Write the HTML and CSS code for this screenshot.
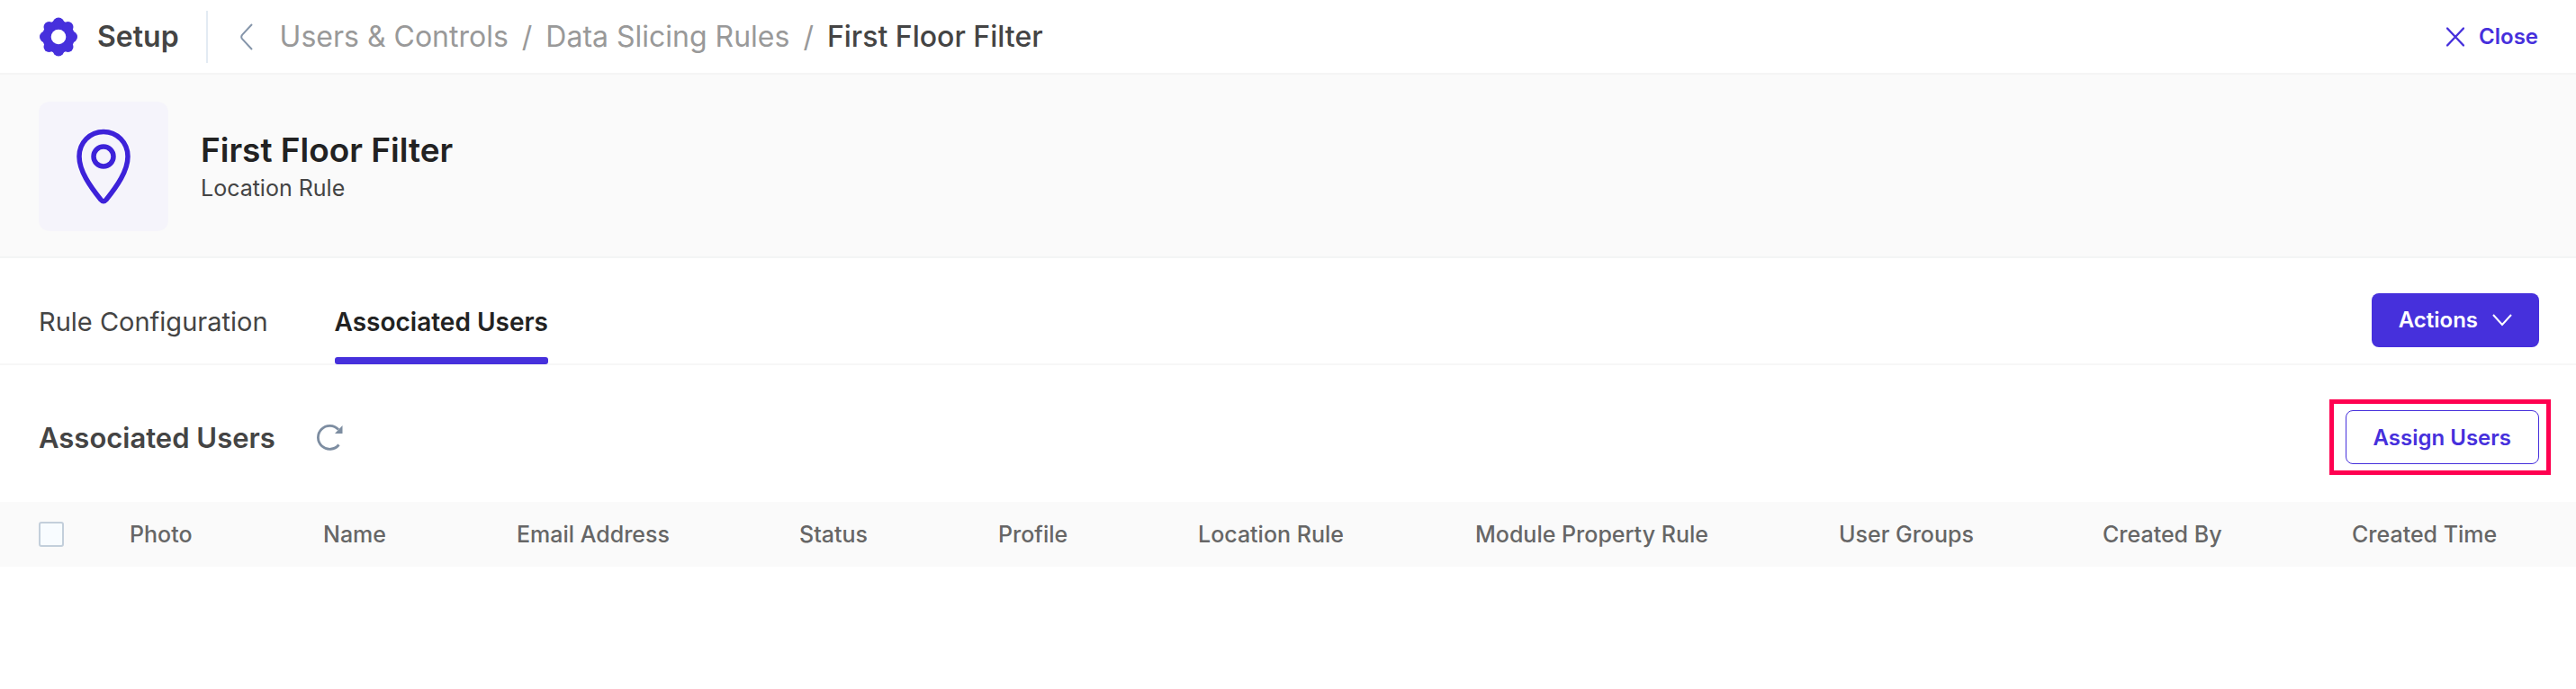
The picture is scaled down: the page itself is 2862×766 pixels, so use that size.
FILE: index.html
```
<!DOCTYPE html>
<html lang="en">
  <head>
    <meta charset="utf-8">
    <title>First Floor Filter</title>
    <link rel="stylesheet" href="styles.css">
  </head>
  <body>
    <header class="topbar">
      <div class="setup">
        <svg class="gear" viewBox="0 0 42 44">
          <g fill="#4630dc">
            <circle cx="21" cy="22" r="18"/>
            <circle cx="21" cy="7" r="6.5"/>
            <circle cx="21" cy="37" r="6.5"/>
            <circle cx="6.5" cy="22" r="6.5"/>
            <circle cx="35.5" cy="22" r="6.5"/>
            <circle cx="10.5" cy="11" r="6"/>
            <circle cx="31.5" cy="11" r="6"/>
            <circle cx="10.5" cy="33" r="6"/>
            <circle cx="31.5" cy="33" r="6"/>
          </g>
          <circle cx="21" cy="22" r="8.3" fill="#fff"/>
        </svg>
        <span>Setup</span>
      </div>
      <nav class="breadcrumb" aria-label="Breadcrumb">
        <button class="back" aria-label="Back">
          <svg width="14" height="30" viewBox="0 0 14 30">
            <path d="M13 1 L2.2 12.6 Q0.2 15 2.2 17.4 L13 29" fill="none" stroke="#8595aa" stroke-width="2"/>
          </svg>
        </button>
        <a href="#">Users &amp; Controls</a>
        <span>/</span>
        <a href="#">Data Slicing Rules</a>
        <span>/</span>
        <span class="current">First Floor Filter</span>
      </nav>
      <button class="close">
        <svg width="20" height="22" viewBox="0 0 20 22">
          <path d="M1 1.5 L19 20.5 M19 1.5 L1 20.5" stroke="#4630dc" stroke-width="2.4" stroke-linecap="round"/>
        </svg>
        Close
      </button>
    </header>

    <section class="hero">
      <div class="tile">
        <svg width="62" height="84" viewBox="0 0 62 84">
          <g fill="none" stroke="#3d22d9" stroke-width="5.5">
            <path d="M31 3.5 C46 3.5 58 15.5 58 31 C58 47 46 64 34 79 Q31 82.5 28 79 C16 64 4 47 4 31 C4 15.5 16 3.5 31 3.5 Z"/>
            <circle cx="31" cy="31" r="11"/>
          </g>
        </svg>
      </div>
      <div>
        <h1>First Floor Filter</h1>
        <p>Location Rule</p>
      </div>
    </section>

    <div class="tabs">
      <a class="tab" href="#">Rule Configuration</a>
      <a class="tab active" href="#">Associated Users</a>
      <button class="btn primary">
        Actions
        <svg width="22" height="14" viewBox="0 0 22 14">
          <path d="M1 1 L11 12 L21 1" fill="none" stroke="#fff" stroke-width="2"/>
        </svg>
      </button>
    </div>

    <div class="list-head">
      <h2>Associated Users</h2>
      <button class="refresh" aria-label="Refresh">
        <svg width="30" height="30" viewBox="0 0 30 30">
          <path d="M24.5 23.5 A13 13 0 1 1 24 6.5" fill="none" stroke="#7d8da1" stroke-width="2.8"/>
          <path d="M28.5 2 V11 H20 Z" fill="#7d8da1"/>
        </svg>
      </button>
      <div class="highlight">
        <button class="btn outline">Assign Users</button>
      </div>
    </div>

    <div class="table-wrap">
      <table>
        <thead>
          <tr>
            <th class="col-check"><input type="checkbox" aria-label="Select all users"></th>
            <th class="col-photo">Photo</th>
            <th class="col-name">Name</th>
            <th class="col-email">Email Address</th>
            <th class="col-status">Status</th>
            <th class="col-profile">Profile</th>
            <th class="col-location">Location Rule</th>
            <th class="col-module">Module Property Rule</th>
            <th class="col-groups">User Groups</th>
            <th class="col-by">Created By</th>
            <th class="col-time">Created Time</th>
          </tr>
        </thead>
      </table>
    </div>
  </body>
</html>
```
FILE: styles.css
```
* {
  box-sizing: border-box;
}
body {
  margin: 0;
  background-color: #fff;
  color: #444;
  font-family: Inter, 'Liberation Sans', sans-serif;
  font-size: 25px;
}
h1, h2, p {
  margin: 0;
}
a {
  color: inherit;
  text-decoration: none;
}
button {
  padding: 0;
  border: 0;
  background: none;
  color: #4630dc;
  font: inherit;
  font-size: 24px;
  font-weight: 600;
  cursor: pointer;
}
svg {
  display: block;
  flex: none;
}
.topbar {
  display: flex;
  align-items: center;
  height: 83px;
  padding: 0 42px 0 44px;
  border-bottom: 2px solid #f5f5f5;
  font-size: 32px;
}
.setup {
  display: flex;
  align-items: center;
  gap: 22px;
  height: 58px;
  padding-right: 30px;
  border-right: 2px solid #e3ebf3;
  font-weight: 600;
}
.gear {
  width: 42px;
  height: 44px;
}
.breadcrumb {
  display: flex;
  align-items: center;
  gap: 15px;
  padding-left: 36px;
  color: #999;
}
.back {
  margin-right: 15px;
}
.current {
  color: #444;
  font-weight: 500;
}
.close {
  display: flex;
  align-items: center;
  gap: 16px;
  margin-left: auto;
}
.hero {
  display: flex;
  align-items: center;
  gap: 36px;
  padding: 30px 43px 28px;
  border-bottom: 2px solid #f3f5f5;
  background-color: #fafafa;
}
.tile {
  display: flex;
  justify-content: center;
  align-items: center;
  width: 144px;
  height: 144px;
  border-radius: 12px;
  background-color: #f5f4fb;
}
.hero h1 {
  color: #222;
  font-size: 37px;
  font-weight: 600;
  line-height: 48px;
}
.hero p {
  line-height: 36px;
}
.tabs {
  display: flex;
  align-items: center;
  gap: 74px;
  height: 119px;
  padding: 20px 41px 0 43px;
  border-bottom: 2px solid #f7f7f7;
}
.tab {
  position: relative;
  display: flex;
  align-items: center;
  align-self: stretch;
  padding-top: 4px;
  font-size: 29px;
}
.active {
  color: #222;
  font-size: 28px;
  font-weight: 600;
}
.active::after {
  content: '';
  position: absolute;
  right: 0;
  bottom: -1px;
  left: 0;
  height: 8px;
  border-radius: 3px;
  background-color: #4630dc;
}
.btn {
  display: flex;
  justify-content: center;
  align-items: center;
  gap: 16px;
  height: 60px;
  padding: 0 30px;
  border-radius: 8px;
}
.primary {
  margin-left: auto;
  background-color: #4630dc;
  color: #fff;
}
.outline {
  border: 1px solid #4630dc;
}
.list-head {
  display: flex;
  align-items: center;
  gap: 46px;
  padding: 38px 28px 30px 43px;
}
.list-head h2 {
  font-size: 31px;
  font-weight: 600;
}
.highlight {
  margin-left: auto;
  padding: 7px 8px 7px 13px;
  border: 5px solid #ff0050;
}
.table-wrap {
  overflow-x: auto;
}
table {
  width: 100%;
  border-collapse: collapse;
  table-layout: fixed;
}
th {
  height: 72px;
  padding: 0;
  background-color: #fafafa;
  color: #666;
  font-weight: 500;
  text-align: left;
  white-space: nowrap;
}
.col-check { width: 144px; padding-left: 43px; }
.col-photo { width: 215px; }
.col-name { width: 215px; }
.col-email { width: 314px; }
.col-status { width: 221px; }
.col-profile { width: 222px; }
.col-location { width: 308px; }
.col-module { width: 404px; }
.col-groups { width: 293px; }
.col-by { width: 277px; }
.col-time { width: 249px; }
input[type="checkbox"] {
  display: block;
  width: 28px;
  height: 28px;
  margin: 0;
  border: 2px solid #c3cfdb;
  border-radius: 3px;
  background-color: #f8fcff;
  appearance: none;
}
```
